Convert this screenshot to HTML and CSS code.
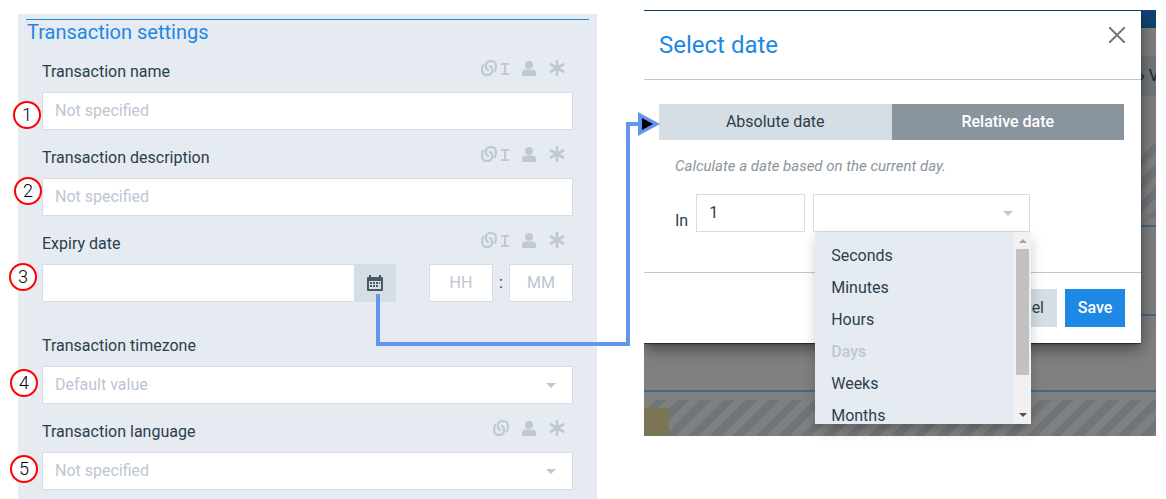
FILE: index.html
```
<!DOCTYPE html>
<html lang="en">
<head>
  <meta charset="UTF-8" />
  <meta name="viewport" content="width=device-width, initial-scale=1" />
  <title>Transaction settings</title>
  <link rel="stylesheet" href="styles.css">
</head>
<body>
  <!-- Icon shapes shared by the field rows -->
  <svg class="sprite" aria-hidden="true">
    <symbol id="icon-link" viewBox="0 0 17 17">
      <g fill="none" stroke="currentColor" stroke-width="2.3" stroke-linecap="round">
        <path d="M2.600 5.200C1.500 6.200 1.200 7.400 1.200 9v2.500a4.300 4.300 0 0 0 4.300 4.300h2a4.300 4.300 0 0 0 4.300-4.300V9.600c0-1.800-1.200-2.400-2.300-3.400"/>
        <path d="M14.400 11.800c1.100-1 1.400-2.200 1.400-3.800V5.500a4.300 4.300 0 0 0-4.300-4.300h-2a4.300 4.300 0 0 0-4.300 4.300v1.900c0 1.800 1.200 2.400 2.300 3.400"/>
      </g>
    </symbol>
    <symbol id="icon-text" viewBox="0 0 8 12">
      <path d="M0 0h8v2H5v8h3v2H0v-2h3V2H0z" fill="currentColor"/>
    </symbol>
    <symbol id="icon-user" viewBox="0 0 14 15">
      <circle cx="7" cy="4" r="4" fill="currentColor"/>
      <path d="M3.500 8.500h7A3.500 3.500 0 0 1 14 12v2q0 1-1 1H1q-1 0-1-1v-2a3.500 3.500 0 0 1 3.500-3.500z" fill="currentColor"/>
    </symbol>
    <symbol id="icon-star" viewBox="0 0 16 16">
      <path d="M8 0v16M1 4l14 8M15 4L1 12" fill="none" stroke="currentColor" stroke-width="2.600"/>
    </symbol>
  </svg>

  <main class="page">
    <section class="settings">
      <h2 class="settings-title">Transaction settings</h2>

      <form class="settings-form">
        <div class="field">
          <div class="field-head">
            <label for="name">Transaction name</label>
            <div class="field-icons">
              <svg class="icon-link"><use href="#icon-link"/></svg>
              <svg class="icon-text"><use href="#icon-text"/></svg>
              <svg class="icon-user"><use href="#icon-user"/></svg>
              <svg class="icon-star"><use href="#icon-star"/></svg>
            </div>
          </div>
          <input class="control" type="text" id="name" placeholder="Not specified">
        </div>

        <div class="field">
          <div class="field-head">
            <label for="description">Transaction description</label>
            <div class="field-icons">
              <svg class="icon-link"><use href="#icon-link"/></svg>
              <svg class="icon-text"><use href="#icon-text"/></svg>
              <svg class="icon-user"><use href="#icon-user"/></svg>
              <svg class="icon-star"><use href="#icon-star"/></svg>
            </div>
          </div>
          <input class="control" type="text" id="description" placeholder="Not specified">
        </div>

        <div class="field field-date">
          <div class="field-head">
            <label for="expiry">Expiry date</label>
            <div class="field-icons">
              <svg class="icon-link"><use href="#icon-link"/></svg>
              <svg class="icon-text"><use href="#icon-text"/></svg>
              <svg class="icon-user"><use href="#icon-user"/></svg>
              <svg class="icon-star"><use href="#icon-star"/></svg>
            </div>
          </div>
          <div class="date-row">
            <input class="control" type="text" id="expiry">
            <button class="calendar-btn" type="button" aria-label="Pick a date">
              <svg width="16" height="17" viewBox="0 0 16 17">
                <path d="M1 2h1V0h2v2h8V0h2v2h1q1 0 1 1v12q0 1-1 1H1q-1 0-1-1V3q0-1 1-1zM2 6v8h12V6z" fill="#455a64" fill-rule="evenodd"/>
                <path d="M6 7h2v2H6zM9 7h2v2H9zM12 7h1v2h-1zM3 10h2v2H3zM6 10h2v2H6zM9 10h2v2H9zM3 7h2v2H3z" fill="#455a64"/>
              </svg>
            </button>
            <div class="time">
              <input class="control" type="text" placeholder="HH" aria-label="Hours">
              <span>:</span>
              <input class="control" type="text" placeholder="MM" aria-label="Minutes">
            </div>
          </div>
        </div>

        <div class="field">
          <div class="field-head">
            <label for="timezone">Transaction timezone</label>
          </div>
          <div class="select">
            <select class="control" id="timezone"><option>Default value</option></select>
          </div>
        </div>

        <div class="field">
          <div class="field-head">
            <label for="language">Transaction language</label>
            <div class="field-icons">
              <svg class="icon-link"><use href="#icon-link"/></svg>
              <svg class="icon-user"><use href="#icon-user"/></svg>
              <svg class="icon-star"><use href="#icon-star"/></svg>
            </div>
          </div>
          <div class="select">
            <select class="control" id="language"><option>Not specified</option></select>
          </div>
        </div>
      </form>

      <!-- Numbered pins over the form -->
      <span class="pin pin-1">1</span>
      <span class="pin pin-2">2</span>
      <span class="pin pin-3">3</span>
      <span class="pin pin-4">4</span>
      <span class="pin pin-5">5</span>

      <!-- Arrow from the calendar button to the dialog -->
      <svg class="connector" width="284" height="236" viewBox="0 0 284 236" aria-hidden="true">
        <path d="M2 184v50h250V14h12" fill="none" stroke="#6495ed" stroke-width="4"/>
        <path d="M262 2l22 12-22 12z" fill="#6495ed"/>
        <path d="M266 8l11 6-11 6z" fill="#000"/>
      </svg>
    </section>

    <section class="preview">
      <!-- Dimmed page behind the dialog -->
      <div class="backdrop">
        <div class="topbar"></div>
        <div class="crumbs"><span>» V</span></div>
        <div class="stripes stripes-top"></div>
        <div class="row row-1"></div>
        <div class="row row-2"></div>
        <div class="row row-3"></div>
        <div class="stripes stripes-bottom"><div class="block"></div></div>
      </div>

      <div class="dialog" role="dialog" aria-labelledby="dialog-title">
        <header class="dialog-head">
          <h3 id="dialog-title">Select date</h3>
          <button class="close" type="button" aria-label="Close">
            <svg width="16" height="16" viewBox="0 0 16 16"><path d="M0 0l16 16M16 0L0 16" stroke="#75787b" stroke-width="2"/></svg>
          </button>
        </header>

        <div class="dialog-body">
          <div class="tabs">
            <button class="tab" type="button">Absolute date</button>
            <button class="tab active" type="button">Relative date</button>
          </div>
          <p class="hint">Calculate a date based on the current day.</p>
          <div class="relative-row">
            <label for="amount">In</label>
            <input class="control amount" type="text" id="amount" value="1">
            <div class="select unit">
              <select class="control" aria-label="Unit"><option></option></select>
              <div class="menu">
                <ul role="listbox" aria-label="Unit">
                  <li role="option">Seconds</li>
                  <li role="option">Minutes</li>
                  <li role="option">Hours</li>
                  <li role="option" class="disabled" aria-disabled="true">Days</li>
                  <li role="option">Weeks</li>
                  <li role="option">Months</li>
                </ul>
                <div class="scrollbar">
                  <i class="arrow-up"></i>
                  <div class="thumb"></div>
                  <i class="arrow-down"></i>
                </div>
              </div>
            </div>
          </div>
        </div>

        <footer class="dialog-foot">
          <button class="btn" type="button">Cancel</button>
          <button class="btn primary" type="button">Save</button>
        </footer>
      </div>
    </section>
  </main>
</body>
</html>
```

FILE: styles.css
```
* {
  box-sizing: border-box;
}

body {
  margin: 0;
  font-family: Roboto, "Liberation Sans", sans-serif;
  font-size: 16px;
  line-height: 24px;
  color: #2c3e4c;
  background: #fff;
}

button,
input,
select {
  font: inherit;
  color: inherit;
  margin: 0;
  border-radius: 0;
}

button {
  border: 0;
  padding: 0;
}

.sprite {
  position: absolute;
  width: 0;
  height: 0;
}

.page {
  display: grid;
  grid-template-columns: 579fr 512fr;
  gap: 47px;
  align-items: start;
  padding: 10px 10px 0 18px;
}

/* Settings panel */
.settings {
  position: relative;
  margin-top: 4px;
  padding: 5px 8px 9px;
  background: #e6ebf2;
}

.settings-title {
  margin: 0;
  padding-left: 1px;
  border-top: 1px solid #1e88e5;
  font-size: 20px;
  font-weight: 400;
  line-height: 24px;
  color: #1e88e5;
}

.settings-form {
  display: flex;
  flex-direction: column;
  gap: 16px;
  padding: 16px 16px 0;
}

.field-date {
  margin-bottom: 16px;
}

.field-head {
  display: flex;
  justify-content: space-between;
  margin-bottom: 8px;
}

.field-icons {
  display: flex;
  align-items: center;
  height: 16px;
  margin-right: 8px;
  color: #bec9d5;
}

.icon-link {
  width: 16px;
  height: 16px;
}

.icon-text {
  width: 8px;
  height: 12px;
  margin: 2px 0 0 4px;
}

.icon-user {
  width: 14px;
  height: 15px;
  margin-left: 13px;
}

.icon-star {
  width: 16px;
  height: 16px;
  margin-left: 13px;
}

.control {
  display: block;
  width: 100%;
  height: 38px;
  padding: 0 12px 2px;
  border: 1px solid #d5dee6;
  background: #fff;
  outline: 0;
}

.control::placeholder {
  color: #bcc6d3;
  opacity: 1;
}

.select {
  position: relative;
}

.select select {
  appearance: none;
  padding-bottom: 0;
  color: #bcc6d3;
}

.select::after {
  content: "";
  position: absolute;
  top: 17px;
  right: 17px;
  border: 5px solid transparent;
  border-top-color: #bcc8d4;
  border-bottom: 0;
}

.date-row {
  display: flex;
}

.date-row > .control {
  flex: 1;
  min-width: 0;
  border-right: 0;
}

.calendar-btn {
  display: grid;
  place-items: center;
  width: 42px;
  height: 38px;
  background: #d5dee5;
}

.time {
  display: flex;
  align-items: center;
  margin-left: 33px;
}

.time .control {
  width: 64px;
  text-align: center;
}

.time span {
  width: 16px;
  text-align: center;
}

/* Pins and arrow */
.pin {
  position: absolute;
  width: 28px;
  height: 28px;
  border: 2px solid #f00;
  border-radius: 50%;
  background: #fff;
  font-size: 18px;
  font-weight: 300;
  line-height: 24px;
  text-align: center;
  color: #000;
}

.pin-1 { left: -5px; top: 87px; }
.pin-2 { left: -4px; top: 163px; }
.pin-3 { left: -9px; top: 249px; }
.pin-4 { left: -8px; top: 355px; }
.pin-5 { left: -8px; top: 441px; }

.connector {
  position: absolute;
  top: 96px;
  right: -63px;
  z-index: 2;
  pointer-events: none;
}

/* Dialog over the dimmed page */
.preview {
  position: relative;
}

.backdrop {
  height: 426px;
  overflow: hidden;
  background: #808080;
}

.topbar {
  height: 18px;
  margin-bottom: 28px;
  background: #0f4473;
}

.crumbs {
  display: flex;
  justify-content: flex-end;
  align-items: center;
  height: 40px;
  background: #72767a;
  color: #1c2226;
}

.crumbs span {
  margin-right: -3px;
}

.stripes {
  background: repeating-linear-gradient(135deg, #808080 0 8px, #70757a 8px 16px);
}

.stripes-top {
  height: 73px;
  margin-top: 48px;
}

.stripes-bottom {
  height: 36px;
  margin-top: 8px;
  padding-top: 8px;
}

.block {
  width: 25px;
  height: 28px;
  background: #7a7655;
}

.row {
  border-bottom: 2px solid #44688a;
}

.row-1 { height: 10px; }
.row-2 { height: 89px; }
.row-3 { height: 76px; }

.dialog {
  position: absolute;
  top: 1px;
  left: 0;
  right: 15px;
  background: #fff;
  box-shadow: 0 1px 1px rgba(0, 0, 0, 0.5), 0 5px 15px rgba(0, 0, 0, 0.5);
  clip-path: inset(-1px -15px -100px 0);
}

.dialog-head {
  display: flex;
  justify-content: space-between;
  height: 69px;
  padding: 16px 16px 0 15px;
  border-bottom: 1px solid #bcc8d4;
}

.dialog-head h3 {
  margin: 0;
  font-size: 24px;
  font-weight: 400;
  line-height: 36px;
  color: #1e88e5;
}

.close {
  width: 16px;
  height: 16px;
  background: none;
}

.close svg {
  display: block;
}

.dialog-body {
  padding: 24px 17px 40px 15px;
}

.tabs {
  display: flex;
}

.tab {
  flex: 1;
  height: 36px;
  background: #d5dee5;
}

.tab.active {
  background: #8a949e;
  color: #fff;
  font-weight: 500;
}

.hint {
  margin: 14px 16px 16px;
  font-size: 15px;
  font-style: italic;
  color: #8a949e;
}

.relative-row {
  display: flex;
  align-items: flex-end;
  gap: 8px;
  padding-left: 16px;
}

.relative-row label {
  line-height: 22px;
}

.amount {
  width: 109px;
}

.unit {
  width: 217px;
}

.menu {
  position: absolute;
  top: 38px;
  left: 2px;
  z-index: 3;
  display: flex;
  width: 216px;
  height: 192px;
  overflow: hidden;
  background: #e6ebf2;
  box-shadow: 0 6px 12px rgba(0, 0, 0, 0.2);
}

.menu ul {
  flex: 1;
  margin: 0;
  padding: 8px 16px;
  list-style: none;
  line-height: 32px;
}

.menu .disabled {
  color: #bcc8d4;
  font-weight: 500;
}

.scrollbar {
  display: flex;
  flex-direction: column;
  align-items: center;
  width: 17px;
  padding: 7px 0;
  background: #f1f1f1;
}

.thumb {
  width: 13px;
  height: 126px;
  margin-top: 6px;
  background: #c1c1c1;
}

.arrow-up,
.arrow-down {
  border: 4px solid transparent;
}

.arrow-up {
  border-top: 0;
  border-bottom-color: #a3a3a3;
}

.arrow-down {
  margin-top: auto;
  border-bottom: 0;
  border-top-color: #505050;
}

.dialog-foot {
  display: flex;
  justify-content: flex-end;
  gap: 8px;
  padding: 16px;
  border-top: 1px solid #bcc8d4;
}

.btn {
  height: 38px;
  padding: 0 13px;
  background: #d5dee5;
}

.btn.primary {
  width: 60px;
  padding: 0;
  background: #1e88e5;
  color: #fff;
  font-weight: 500;
}
```
